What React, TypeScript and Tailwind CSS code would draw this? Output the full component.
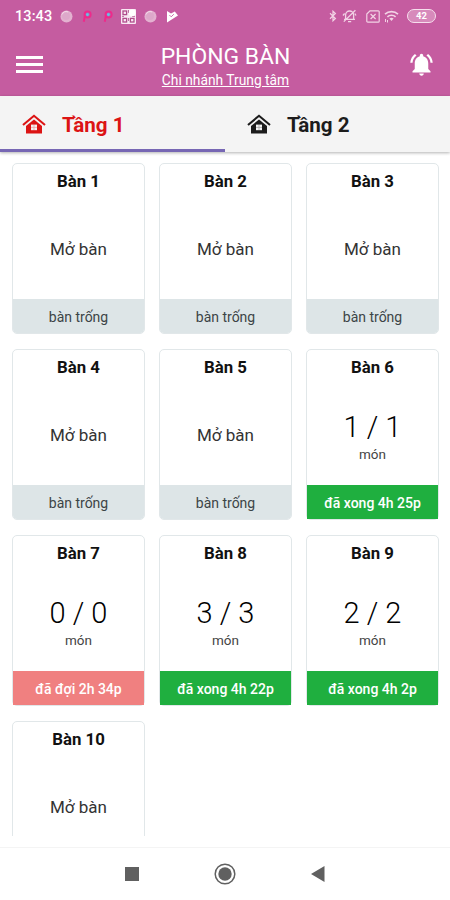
import React from 'react';
import { MdNotificationsActive } from 'react-icons/md';

type TableStatus = 'empty' | 'waiting' | 'done';

interface Table {
  id: number;
  status: TableStatus;
  count?: string;
  label?: string;
}

const tables: Table[] = [
  { id: 1, status: 'empty', label: 'bàn trống' },
  { id: 2, status: 'empty', label: 'bàn trống' },
  { id: 3, status: 'empty', label: 'bàn trống' },
  { id: 4, status: 'empty', label: 'bàn trống' },
  { id: 5, status: 'empty', label: 'bàn trống' },
  { id: 6, status: 'done', count: '1 / 1', label: 'đã xong 4h 25p' },
  { id: 7, status: 'waiting', count: '0 / 0', label: 'đã đợi 2h 34p' },
  { id: 8, status: 'done', count: '3 / 3', label: 'đã xong 4h 22p' },
  { id: 9, status: 'done', count: '2 / 2', label: 'đã xong 4h 2p' },
  { id: 10, status: 'empty' },
];

const footerStyles: Record<TableStatus, string> = {
  empty: 'bg-[#dde5e7] text-[#3c4446] rounded-b-[4px]',
  waiting: 'bg-[#f08080] text-white font-medium',
  done: 'bg-[#1faf3f] text-white font-medium',
};

function AppDot() {
  return (
    <svg className="h-[13px] w-[13px]" viewBox="0 0 13 13">
      <circle cx="6.5" cy="6.5" r="6" fill="#e3b1d0" />
      <circle cx="6" cy="6" r="4" fill="#dda8ca" />
      <path d="M2 4.5a5 5 0 0 1 6-2.6" fill="none" stroke="#f3dcea" strokeWidth="1" />
    </svg>
  );
}

function PinIcon() {
  return (
    <svg className="h-[13px] w-[10px]" viewBox="0 0 10 13">
      <path d="M1.8 11.8 3 5.2" fill="none" stroke="#ee2a8b" strokeWidth="2" />
      <circle cx="5.6" cy="4.6" r="3" fill="#8f86bd" stroke="#ee2a8b" strokeWidth="2" />
      <circle cx="5.4" cy="4.6" r="1.3" fill="#6ac0e4" />
    </svg>
  );
}

function StatusBar() {
  return (
    <div className="flex h-8 items-center justify-between pl-[15px] pr-[14px] text-white">
      <div className="flex items-center">
        <span className="w-[45px] pt-[3px] text-[14.5px] font-medium leading-none tracking-[0.1px]">13:43</span>
        <AppDot />
        <div className="ml-[9px] flex gap-[11px]">
          <PinIcon />
          <PinIcon />
        </div>
        <svg className="ml-[8px] h-[15px] w-[15px]" viewBox="0 0 15 15">
          <rect width="15" height="15" rx="1" fill="#f9e9f3" />
          <g fill="none" stroke="#b04d8c" strokeWidth="1.3">
            <rect x="2" y="2" width="3.6" height="3.6" />
            <rect x="2" y="9.4" width="3.6" height="3.6" />
            <rect x="9.4" y="9.4" width="3.6" height="3.6" />
          </g>
          <path d="M7.5 1v3M7.5 9v3M1 7.4h2M11 7.4h3" stroke="#b04d8c" strokeWidth="0.8" />
          <circle cx="11.2" cy="3.8" r="3.4" fill="#fff" />
        </svg>
        <div className="ml-[8px]">
          <AppDot />
        </div>
        <svg className="ml-[9px] h-[13px] w-[12px]" viewBox="0 0 12 13">
          <path d="M1 1l4 2.4L8.8 1.5 12 5.5 1 12.5z" fill="#fff" />
          <path d="M3.4 5l1.8 1.8 2.6-2.6" fill="none" stroke="#c55ca0" strokeWidth="0.9" />
        </svg>
      </div>
      <div className="flex items-center">
        <svg className="h-[12px] w-[8px]" viewBox="0 0 8 12" fill="none" stroke="#f2d3e5" strokeWidth="1.2">
          <path d="M1 3.3l5.4 5.2L4 10.8V1.2l2.4 2.3L1 8.7" />
        </svg>
        <svg className="ml-[5px] h-[14px] w-[15px]" viewBox="0 0 15 14" fill="none" stroke="#f2d3e5" strokeWidth="1.3">
          <path d="M3.6 9.8V6a4 4 0 0 1 8 0v3.8M2 10.3h11M6 12.6h3.2M1.8 12.6L13.4 1.2M1 6.5l1.6-2M14 6.5l-1.2-2" />
        </svg>
        <svg className="ml-[9px] h-[13px] w-[14px]" viewBox="0 0 14 13" fill="none" stroke="#f2d3e5" strokeWidth="1.2">
          <path d="M4 .8h8.2a1 1 0 0 1 1 1v9.4a1 1 0 0 1-1 1H1.8a1 1 0 0 1-1-1V4z" />
          <path d="M4.6 4l5 5M9.6 4l-5 5" />
        </svg>
        <svg className="ml-[4px] h-[13px] w-[15px]" viewBox="0 0 15 13" fill="none" stroke="#f2d3e5" strokeWidth="1.6">
          <path d="M1 4.2a9.5 9.5 0 0 1 13 0M3.4 6.8a6 6 0 0 1 8.2 0" />
          <path d="M5.4 8.6a3.2 3.2 0 0 1 4.2 0L7.5 11z" fill="#f2d3e5" stroke="none" />
          <path d="M1.5 9v3M3.5 10v2.5" strokeWidth="1" />
        </svg>
        <div className="ml-[8px] flex h-[14px] w-[29px] items-center justify-center rounded-full border-[1.5px] border-[#f6dfed] bg-[#d78abb] text-[9.5px] font-bold leading-none">
          42
        </div>
      </div>
    </div>
  );
}

function Header() {
  return (
    <header className="h-24 shrink-0 bg-[#c55ca0] text-white">
      <StatusBar />
      <div className="flex h-16 items-center justify-between pl-4 pr-[15px]">
        <button className="flex w-[27px] flex-col gap-[4px]" aria-label="Menu">
          <span className="h-[3px] w-full bg-white" />
          <span className="h-[3px] w-full bg-white" />
          <span className="h-[3px] w-full bg-white" />
        </button>
        <div className="flex flex-col items-center pt-[5px]">
          <h1 className="text-[22.9px] leading-[27px] whitespace-nowrap">PHÒNG BÀN</h1>
          <a className="text-[13.8px] leading-[20px] underline whitespace-nowrap">Chi nhánh Trung tâm</a>
        </div>
        <MdNotificationsActive className="h-[27px] w-[27px]" />
      </div>
    </header>
  );
}

function HouseIcon() {
  return (
    <svg className="h-[20px] w-[24px]" viewBox="0 0 24 20">
      <path d="M1 11L12 1.8 23 11" fill="none" stroke="currentColor" strokeWidth="2.1" />
      <path d="M12 5.4l8 6.6v7.5H4V12z" fill="currentColor" />
      <path d="M9 10.6h6v5.6H9z" fill="#f4f4f4" />
      <path d="M12 10.6v5.6M9 13.4h6" stroke="currentColor" strokeWidth="0.7" opacity="0.4" />
    </svg>
  );
}

function FloorTab({ name, active }: { name: string; active?: boolean }) {
  return (
    <button
      className={`flex flex-1 items-center pl-[22px] border-b-[3px] ${
        active ? 'text-[#dc1414] border-[#7767b4]' : 'text-[#1c1c1c] border-transparent'
      }`}
    >
      <span className="pt-[2px]">
        <HouseIcon />
      </span>
      <span className="ml-[16px] text-[20.6px] font-bold leading-none pt-[5px]">{name}</span>
    </button>
  );
}

function TableCard({ table }: { table: Table }) {
  return (
    <div className="flex h-[171px] flex-col rounded-[5px] border border-[#e1e7e9] bg-white text-center">
      <h2 className="pt-[6px] text-[16.8px] font-bold leading-[22px] text-[#111]">Bàn {table.id}</h2>
      <div className="flex flex-1 flex-col items-center">
        {table.count ? (
          <>
            <div className="mt-[31px] text-[29px] font-light leading-[36px] text-black">{table.count}</div>
            <div className="mt-[-1px] text-[13.5px] leading-[20px] text-[#444]">món</div>
          </>
        ) : (
          <div className="mt-[46px] text-[17px] leading-[22px] text-[#333]">Mở bàn</div>
        )}
      </div>
      {table.label && (
        <div className={`flex h-[34px] items-center justify-center pt-[2px] text-[14px] leading-none ${footerStyles[table.status]}`}>
          {table.label}
        </div>
      )}
    </div>
  );
}

function NavBar() {
  return (
    <nav className="flex h-[53px] shrink-0 items-center justify-center gap-[75px] border-t border-[#f4f4f4] bg-white pr-px text-[#606060]">
      <span className="h-[14px] w-[14px] bg-[#606060]" />
      <svg className="h-[22px] w-[22px]" viewBox="0 0 22 22">
        <circle cx="11" cy="11" r="9.8" fill="none" stroke="currentColor" strokeWidth="1.5" />
        <circle cx="11" cy="11" r="6.7" fill="currentColor" />
      </svg>
      <svg className="h-[16px] w-[14px]" viewBox="0 0 14 16">
        <path d="M13.5 0v16L0 8z" fill="currentColor" />
      </svg>
    </nav>
  );
}

export default function App() {
  return (
    <div className="flex h-[900px] w-[450px] flex-col overflow-hidden bg-white font-['Roboto',sans-serif]">
      <Header />
      <div className="z-10 flex h-14 shrink-0 bg-[#f4f4f4] shadow-[0_1px_3px_rgba(0,0,0,0.3)]">
        <FloorTab name="Tầng 1" active />
        <FloorTab name="Tầng 2" />
      </div>
      <main className="h-[684px] shrink-0 overflow-hidden pl-[12px] pr-[12px] pt-[11px]">
        <div className="grid grid-cols-[133px_133px_133px] gap-x-[14px] gap-y-[15px]">
          {tables.map((table) => (
            <TableCard key={table.id} table={table} />
          ))}
        </div>
      </main>
      <div className="h-[11px] shrink-0" />
      <NavBar />
    </div>
  );
}
